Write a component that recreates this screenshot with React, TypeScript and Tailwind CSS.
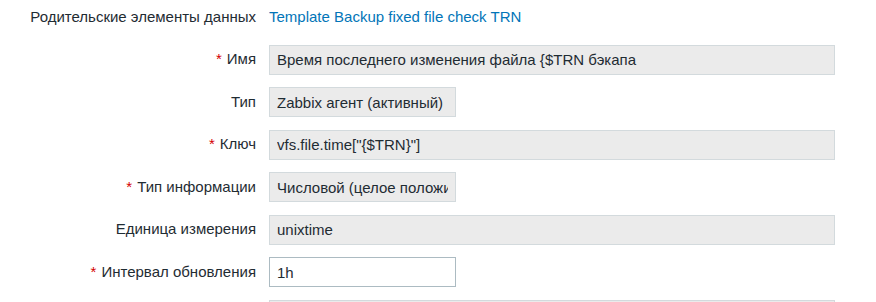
import React from 'react';

interface FieldRow {
  label: string;
  required?: boolean;
  value: string;
  wide?: boolean;
  editable?: boolean;
}

const rows: FieldRow[] = [
  { label: 'Имя', required: true, value: 'Время последнего изменения файла {$TRN бэкапа', wide: true },
  { label: 'Тип', value: 'Zabbix агент (активный)' },
  { label: 'Ключ', required: true, value: 'vfs.file.time["{$TRN}"]', wide: true },
  { label: 'Тип информации', required: true, value: 'Числовой (целое положительное)' },
  { label: 'Единица измерения', value: 'unixtime', wide: true },
  { label: 'Интервал обновления', required: true, value: '1h', editable: true },
  { label: '', value: '', wide: true },
];

const Label: React.FC<{ row: FieldRow }> = ({ row }) => (
  <div className="flex h-[30px] items-center justify-end whitespace-nowrap">
    {row.required && <span className="mr-[5px] text-[#d40000]">*</span>}
    <span>{row.label}</span>
  </div>
);

const Field: React.FC<{ row: FieldRow }> = ({ row }) => (
  <input
    readOnly
    value={row.value}
    className={
      'block h-[30px] border px-[7px] text-[#1f2c33] outline-none ' +
      (row.wide ? 'w-[566px] ' : 'w-[187px] ') +
      (row.editable ? 'border-[#acbbc2] bg-white' : 'border-[#d3dadd] bg-[#ebebeb]')
    }
  />
);

export default function App() {
  return (
    <div
      className="h-[302px] w-[876px] overflow-hidden bg-white pt-[2px] text-[15px] text-[#1f2c33]"
      style={{ fontFamily: '"Liberation Sans", Arial, sans-serif' }}
    >
      <div className="grid grid-cols-[256px_1fr] gap-x-[13px] gap-y-[12.5px]">
        <div className="flex h-[30px] items-center justify-end whitespace-nowrap">
          Родительские элементы данных
        </div>
        <div className="flex h-[30px] items-center">
          <a className="text-[#0275b8]">Template Backup fixed file check TRN</a>
        </div>
        {rows.map((row, i) => (
          <React.Fragment key={i}>
            <Label row={row} />
            <Field row={row} />
          </React.Fragment>
        ))}
      </div>
    </div>
  );
}
